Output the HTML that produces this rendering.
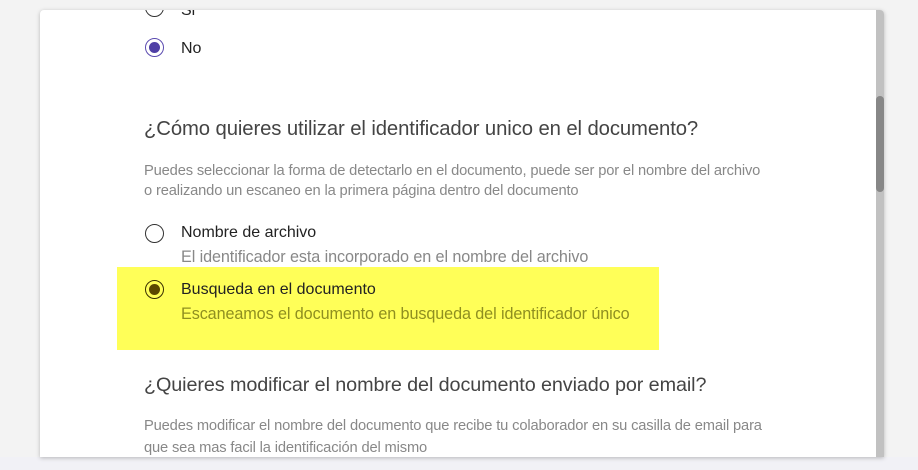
<!DOCTYPE html>
<html><head><meta charset="utf-8"><style>
html,body{margin:0;padding:0;width:918px;height:470px;overflow:hidden;background:#f3f3f3;font-family:"Liberation Sans",sans-serif;}
.bottom{position:absolute;left:0;top:457px;width:918px;height:13px;background:#f1f1f6;}
.card{position:absolute;left:40px;top:10px;width:844px;height:447px;background:#fff;border-radius:4px 4px 0 0;box-shadow:0 1px 4px rgba(0,0,0,.25);overflow:hidden;}
.sb{position:absolute;left:836px;top:0;width:8px;height:447px;background:#c1c1c1;}
.thumb{position:absolute;left:0;top:86px;width:8px;height:96px;background:#878787;border-radius:4px;}
.t{position:absolute;white-space:nowrap;}
.radio{position:absolute;width:17px;height:17px;border:1.5px solid #333;border-radius:50%;box-sizing:content-box;}
.radio i{position:absolute;left:3px;top:3px;width:11px;height:11px;border-radius:50%;}
.h{font-size:20.3px;color:#444;letter-spacing:-0.1px}
.p{font-size:14.7px;color:#888;letter-spacing:-0.15px}
.l{font-size:16px;color:#222}
.s{font-size:16.2px;color:#888;letter-spacing:-0.1px}
.hl{position:absolute;left:77px;top:257px;width:542px;height:83px;background:#ffff58;}
</style></head><body>
<div class="bottom"></div>
<div class="card">
  <div class="radio" style="left:105px;top:-12px"></div>
  <div class="t l" style="left:141px;top:-8px">Si</div>
  <div class="radio" style="left:105px;top:28px;border-color:#5b4bb0"><i style="background:#4f3fa5"></i></div>
  <div class="t l" style="left:141px;top:30px">No</div>
  <div class="t h" style="left:104px;top:108px">¿Cómo quieres utilizar el identificador unico en el documento?</div>
  <div class="t p" style="left:104px;top:153px">Puedes seleccionar la forma de detectarlo en el documento, puede ser por el nombre del archivo</div>
  <div class="t p" style="left:104px;top:173px">o realizando un escaneo en la primera página dentro del documento</div>
  <div class="radio" style="left:105px;top:214px"></div>
  <div class="t l" style="left:141px;top:214px">Nombre de archivo</div>
  <div class="t s" style="left:141px;top:238px">El identificador esta incorporado en el nombre del archivo</div>
  <div class="hl"></div>
  <div class="radio" style="left:105px;top:270px;border-color:#3a3000"><i style="background:#5a4700"></i></div>
  <div class="t l" style="left:141px;top:271px">Busqueda en el documento</div>
  <div class="t s" style="left:141px;top:295px;color:#8f8f20">Escaneamos el documento en busqueda del identificador único</div>
  <div class="t h" style="left:104px;top:364px;font-size:19.8px">¿Quieres modificar el nombre del documento enviado por email?</div>
  <div class="t p" style="left:104px;top:408px">Puedes modificar el nombre del documento que recibe tu colaborador en su casilla de email para</div>
  <div class="t p" style="left:104px;top:430px">que sea mas facil la identificación del mismo</div>
  <div class="sb"><div class="thumb"></div></div>
</div>
</body></html>
